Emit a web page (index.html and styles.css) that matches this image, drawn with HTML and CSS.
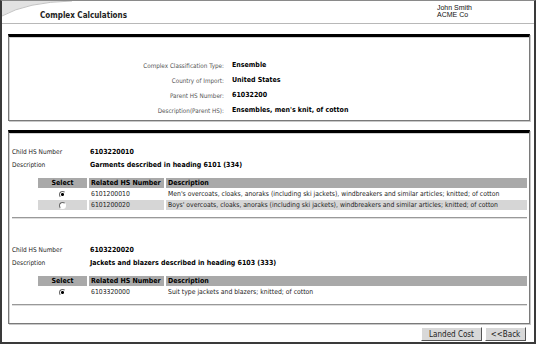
FILE: index.html
```html
<!DOCTYPE html>
<html lang="en">
<head>
    <meta charset="UTF-8">
    <title>Complex Calculations</title>
    <link rel="stylesheet" href="styles.css">
</head>
<body>
    <div class="frame">
        <div class="header">
            <svg class="swoosh" width="70" height="16" viewBox="0 0 70 16">
                <path d="M0 0 H70 Q25 1 0 15 Z" fill="#e2e2e2"/>
                <path d="M0 15 Q25 1 70 0" fill="none" stroke="#c4c4c4" stroke-width="1"/>
            </svg>
            <h1>Complex Calculations</h1>
            <div class="user">John Smith<br>ACME Co</div>
        </div>

        <div class="panel summary">
            <div class="fields">
                <span class="label">Complex Classification Type:</span><b>Ensemble</b>
                <span class="label">Country of Import:</span><b>United States</b>
                <span class="label">Parent HS Number:</span><b>61032200</b>
                <span class="label">Description(Parent HS):</span><b>Ensembles, men's knit, of cotton</b>
            </div>
        </div>

        <div class="panel children">
            <div class="child">
                <div class="child-info">
                    <span>Child HS Number</span><b>6103220010</b>
                    <span>Description</span><b>Garments described in heading 6101 (334)</b>
                </div>
                <table class="related">
                    <tr><th class="sel">Select</th><th class="num">Related HS Number</th><th>Description</th></tr>
                    <tr><td class="sel"><input type="radio" name="r1" checked></td><td>6101200010</td><td>Men's overcoats, cloaks, anoraks (including ski jackets), windbreakers and similar articles; knitted; of cotton</td></tr>
                    <tr class="alt"><td class="sel"><input type="radio" name="r1"></td><td>6101200020</td><td>Boys' overcoats, cloaks, anoraks (including ski jackets), windbreakers and similar articles; knitted; of cotton</td></tr>
                </table>
                <hr>
            </div>
            <div class="child">
                <div class="child-info">
                    <span>Child HS Number</span><b>6103220020</b>
                    <span>Description</span><b>Jackets and blazers described in heading 6103 (333)</b>
                </div>
                <table class="related">
                    <tr><th class="sel">Select</th><th class="num">Related HS Number</th><th>Description</th></tr>
                    <tr><td class="sel"><input type="radio" name="r2" checked></td><td>6103320000</td><td>Suit type jackets and blazers; knitted; of cotton</td></tr>
                </table>
                <hr>
            </div>
        </div>

        <div class="buttons">
            <button class="landed">Landed Cost</button>
            <button class="back">&lt;&lt;Back</button>
        </div>
    </div>
</body>
</html>
```
FILE: styles.css
```css
body {
    margin: 0;
    padding: 0;
    background: #fff;
    font-family: "DejaVu Sans Condensed", "DejaVu Sans", sans-serif;
    font-size: 7px;
    color: #000;
}
.frame {
    width: 536px;
    height: 344px;
    box-sizing: border-box;
    border: 2px solid #3a3a3a;
    border-top: 1px solid #8a8a8a;
    background: #fff;
}
.header {
    position: relative;
    height: 22px;
    border-bottom: 1px solid #b8b8b8;
    display: flex;
    justify-content: space-between;
}
.swoosh {
    position: absolute;
    left: 0;
    top: 0;
}
h1 {
    margin: 10px 0 0 38px;
    font-size: 8px;
    font-weight: bold;
    color: #222;
}
.user {
    font-family: "Liberation Sans", Arial, sans-serif;
    font-size: 7px;
    line-height: 7px;
    margin: 3px 62px 0 0;
    color: #111;
}
.panel {
    margin: 10px 4px 0 6px;
    border: 1px solid #7a7a7a;
    border-top: 3px solid #000;
    box-shadow: inset 1px 1px 0 #d0d0d0, 1px 1px 0 #c8c8c8;
}
.summary {
    height: 87px;
    box-sizing: border-box;
    padding-top: 24px;
}
.fields {
    display: grid;
    grid-template-columns: 215px auto;
    column-gap: 8px;
    row-gap: 6px;
    line-height: 9px;
}
.label {
    text-align: right;
    color: #555;
    font-size: 6.3px;
}
.children {
    margin-top: 9px;
    height: 194px;
    box-sizing: border-box;
    padding: 15px 2px 0 3px;
}
.child {
    margin-bottom: 27px;
}
.child-info {
    display: grid;
    grid-template-columns: 78px auto;
    row-gap: 4px;
    line-height: 9px;
}
.child-info span {
    font-size: 6.5px;
    color: #222;
}
.related {
    margin: 7px 0 0 24px;
    width: 493px;
    border-collapse: separate;
    border-spacing: 2px 1px;
}
.related th {
    background: #a9a9a9;
    text-align: left;
    font-weight: bold;
    height: 10px;
    padding: 0 2px;
}
.related td {
    height: 10px;
    padding: 0 2px;
    color: #222;
    font-size: 6.8px;
}
.related .sel {
    width: 45px;
    text-align: center;
}
.related .num {
    width: 71px;
}
.related tr.alt td {
    background: #d6d6d6;
}
input[type="radio"] {
    appearance: none;
    width: 7px;
    height: 7px;
    margin: 0;
    border-radius: 50%;
    border: 1px solid;
    border-color: #666 #fff #fff #666;
    background: #fff;
    vertical-align: middle;
    box-sizing: border-box;
}
input[type="radio"]:checked {
    background: radial-gradient(circle, #000 1.3px, #fff 1.6px);
}
hr {
    margin: 6px 0 0 0;
    border: 0;
    border-top: 1px solid #999;
    border-bottom: 1px solid #ddd;
}
.buttons {
    display: flex;
    justify-content: flex-end;
    gap: 3px;
    margin: 3px 8px 0 0;
}
button {
    font-family: inherit;
    font-size: 8px;
    height: 14px;
    padding: 0;
    background: #d8d8d8;
    border: 1px solid;
    border-color: #fff #555 #555 #fff;
    color: #222;
}
.landed {
    width: 61px;
}
.back {
    width: 41px;
}
```
